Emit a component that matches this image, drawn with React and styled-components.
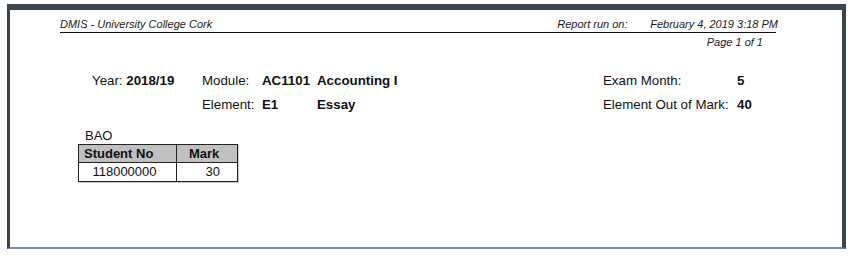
import React from "react";
import styled, { createGlobalStyle } from "styled-components";

const GlobalStyle = createGlobalStyle`
  html, body {
    margin: 0;
    padding: 0;
    background: #ffffff;
  }
  body {
    font-family: "Liberation Sans", Arial, sans-serif;
    color: #111111;
  }
`;

const Frame = styled.div`
  box-sizing: border-box;
  margin: 4px 0 0 7px;
  width: 839px;
  height: 245px;
  background: #ffffff;
  border-top: 6px solid #3d4451;
  border-left: 3px solid #3d4451;
  border-right: 4px solid #3d4451;
  border-bottom: 2px solid #7788a6;
  padding-top: 8px;
`;

const Header = styled.div`
  margin-left: 50px;
  width: 716px;
`;

const HeaderRow = styled.div`
  display: flex;
  align-items: baseline;
  font-size: 11px;
  font-style: italic;
  line-height: 13px;
  color: #1a1a1a;
`;

const HeaderTitle = styled.div`
  flex: 1;
`;

const RunLabel = styled.div`
  width: 93px;
`;

const RunDate = styled.div`
  white-space: nowrap;
  margin-right: -2px;
`;

const Rule = styled.div`
  border-bottom: 1px solid #111111;
  margin-top: 1px;
`;

const PageNo = styled.div`
  text-align: right;
  padding-right: 13px;
  margin-top: 3px;
  font-size: 11px;
  font-style: italic;
  line-height: 13px;
  color: #1a1a1a;
`;

const Info = styled.div`
  display: grid;
  grid-template-columns: 110px 60px 55px 286px 134px 40px;
  grid-auto-rows: 24px;
  align-items: center;
  margin: 19px 0 0 82px;
  font-size: 13.3px;
`;

const Cell = styled.div`
  font-weight: ${({ $bold }) => ($bold ? 700 : 400)};
  white-space: nowrap;
`;

const Strong = styled.span`
  font-weight: 700;
`;

const Section = styled.div`
  margin: 12px 0 0 68px;
`;

const GroupName = styled.div`
  font-size: 13px;
  line-height: 15px;
  margin-left: 7px;
`;

const Table = styled.table`
  border-collapse: collapse;
  margin-top: 1px;
  font-size: 13px;
  box-shadow: 1px 1px 0 #c8c8c8;
`;

const Th = styled.th`
  background: #c0c0c0;
  border: 1px solid #222222;
  height: 17px;
  padding: 0 0 0 ${({ $pad }) => $pad}px;
  width: ${({ $w }) => $w}px;
  text-align: left;
  font-weight: 700;
  line-height: 16px;
`;

const Td = styled.td`
  border: 1px solid #222222;
  height: 18px;
  padding: 0 ${({ $right }) => ($right ? "17px" : "6px")} 0 0;
  text-align: ${({ $right }) => ($right ? "right" : "center")};
  line-height: 16px;
`;

export default function App() {
  return (
    <>
      <GlobalStyle />
      <Frame>
        <Header>
          <HeaderRow>
            <HeaderTitle>DMIS - University College Cork</HeaderTitle>
            <RunLabel>Report run on:</RunLabel>
            <RunDate>February 4, 2019 3:18 PM</RunDate>
          </HeaderRow>
          <Rule />
          <PageNo>Page 1 of 1</PageNo>
        </Header>

        <Info>
          <Cell>
            Year: <Strong>2018/19</Strong>
          </Cell>
          <Cell>Module:</Cell>
          <Cell $bold>AC1101</Cell>
          <Cell $bold>Accounting I</Cell>
          <Cell>Exam Month:</Cell>
          <Cell $bold>5</Cell>

          <Cell />
          <Cell>Element:</Cell>
          <Cell $bold>E1</Cell>
          <Cell $bold>Essay</Cell>
          <Cell>Element Out of Mark:</Cell>
          <Cell $bold>40</Cell>
        </Info>

        <Section>
          <GroupName>BAO</GroupName>
          <Table>
            <thead>
              <tr>
                <Th $w={92} $pad={5}>Student No</Th>
                <Th $w={48} $pad={12}>Mark</Th>
              </tr>
            </thead>
            <tbody>
              <tr>
                <Td>118000000</Td>
                <Td $right>30</Td>
              </tr>
            </tbody>
          </Table>
        </Section>
      </Frame>
    </>
  );
}
